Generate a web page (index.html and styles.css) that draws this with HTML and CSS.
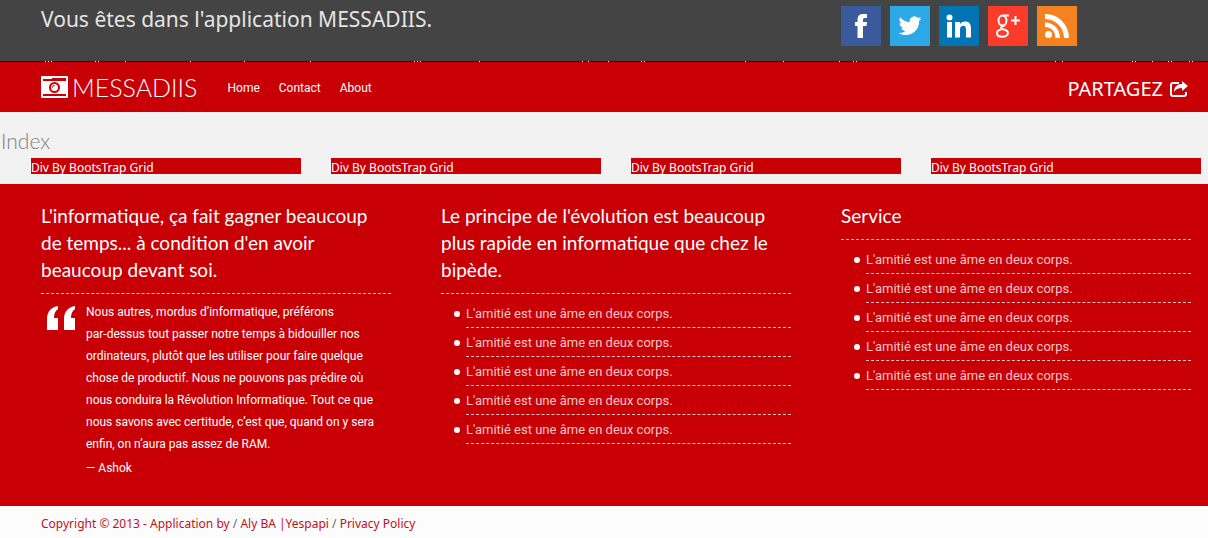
FILE: index.html
```html
<!DOCTYPE html>
<html lang="fr">
<head>
<meta charset="utf-8">
<title>MESSADIIS</title>
<link rel="stylesheet" href="styles.css">
</head>
<body>
<header class="top">
  <p class="welcome">Vous êtes dans l'application MESSADIIS.</p>
  <nav class="social" aria-label="Réseaux sociaux">
    <a class="tile facebook" href="#" aria-label="Facebook"><svg viewBox="0 0 40 40"><path d="M16.500 32V20H14v-4h2.500v-2c0-4 2-6 5.500-6h4v4h-2c-1.500 0-2 .8-2 2v2h4l-.5 4H22v12z"/></svg></a>
    <a class="tile twitter" href="#" aria-label="Twitter"><svg viewBox="0 0 40 40"><path d="M31.500 12.500c-.8.400-1.700.7-2.700.8 1-.6 1.700-1.500 2-2.500-.9.500-1.900.9-3 1.100a4.700 4.700 0 0 0-8 4.300c-3.900-.2-7.400-2.100-9.700-4.900-1.200 2-.7 4.800 1.500 6.200-.8 0-1.500-.2-2.100-.6 0 2.300 1.600 4.200 3.800 4.700-.7.200-1.400.2-2.100.1.600 1.900 2.300 3.200 4.400 3.300a9.500 9.500 0 0 1-7 1.900c2.100 1.400 4.600 2.100 7.200 2.100 8.700 0 13.600-7.300 13.300-14 .9-.7 1.800-1.500 2.400-2.500z"/></svg></a>
    <a class="tile linkedin" href="#" aria-label="LinkedIn"><svg viewBox="0 0 40 40"><circle cx="10.500" cy="11.500" r="3"/><path d="M8 16h5v15.500H8zM16 16h5v2.200c1-1.700 2.800-2.600 5-2.600 4.500 0 6 2.700 6 7.200v8.700h-5v-8c0-2.300-.5-3.700-2.600-3.700-2.200 0-3.400 1.400-3.400 3.900v7.800h-5z"/></svg></a>
    <a class="tile google" href="#" aria-label="Google plus"><svg viewBox="0 0 40 40"><g class="line"><ellipse cx="14.500" cy="14.500" rx="4" ry="5"/><path d="M15 9.500h6M17 19c-3 1.500-4.500 2-3.500 3.500 1 1.300 6.500 1 6.500 4.300 0 2.500-2.500 4-5.500 4S9 29.500 9 27.300c0-2 2-3.600 4.500-4M27.500 10v9M23 14.500h9"/></g></svg></a>
    <a class="tile rss" href="#" aria-label="RSS"><svg viewBox="0 0 40 40"><circle cx="11.500" cy="28.500" r="3.500"/><path d="M8 16.500V21c6 0 10.500 4.500 10.500 11H23c0-9-6.500-15.500-15-15.500zM8 8v5c10.500 0 19 8.500 19 19h5C32 18.500 21.500 8 8 8z"/></svg></a>
  </nav>
</header>
<svg class="edge" viewBox="0 0 1208 1" preserveAspectRatio="none" aria-hidden="true"><path d="M45 0h1v1h-1zM48 0h1v1h-1zM51 0h1v1h-1zM95 0h1v1h-1zM98 0h1v1h-1zM125 0h1v1h-1zM190 0h1v1h-1zM244 0h1v1h-1zM310 0h1v1h-1zM414 0h1v1h-1zM417 0h1v1h-1zM420 0h1v1h-1zM479 0h1v1h-1zM582 0h1v1h-1zM588 0h1v1h-1zM608 0h1v1h-1zM641 0h1v1h-1zM644 0h1v1h-1zM745 0h1v1h-1zM783 0h1v1h-1zM839 0h1v1h-1zM853 0h1v1h-1zM856 0h1v1h-1zM1055 0h1v1h-1zM1062 0h1v1h-1zM1132 0h1v1h-1zM1135 0h1v1h-1zM1152 0h1v1h-1zM1168 0h1v1h-1zM1171 0h1v1h-1zM1189 0h1v1h-1zM1192 0h1v1h-1z"/></svg>
<div class="bar">
  <a class="brand" href="#"><svg class="camera" viewBox="0 0 27 22"><rect class="body" width="27" height="22" rx="1"/><path class="cut" d="M2 3h9V2h14v3H2zM2 18h23v2H2z"/><circle class="lens" cx="13.500" cy="11.500" r="4.500"/><path class="glint" d="M11.500 11.500a2 2 0 0 1 2-2"/></svg><span>MESSADIIS</span></a>
  <nav class="menu"><a href="#">Home</a><a href="#">Contact</a><a href="#">About</a></nav>
  <a class="share" href="#">PARTAGEZ <svg viewBox="0 0 20 18"><path class="box" d="M10 3H4Q2 3 2 5v9q0 2 2 2h11q2 0 2-2v-2"/><path class="arrow" d="M13 1l6 5-6 5V8C9 8 7 9 5 12c0-5 3-8 8-8z"/></svg></a>
</div>
<main class="index">
  <h1>Index</h1>
  <div class="grid"><div>Div By BootsTrap Grid</div><div>Div By BootsTrap Grid</div><div>Div By BootsTrap Grid</div><div>Div By BootsTrap Grid</div></div>
</main>
<section class="columns">
  <article>
    <h2>L'informatique, ça fait gagner beaucoup de temps... à condition d'en avoir beaucoup devant soi.</h2>
    <div class="quote">
      <svg viewBox="0 0 29 25"><path d="M11 0v3C8 5 7 8 7 12h4v12H0V13C0 6 4 1 11 0zM28 0v3c-3 2-4 5-4 9h4v12H17V13C17 6 21 1 28 0z"/></svg>
      <blockquote><p>Nous autres, mordus d’informatique, préférons <br>par-dessus tout passer notre temps à bidouiller nos ordinateurs, plutôt que les utiliser pour faire quelque chose de productif. Nous ne pouvons pas prédire où nous conduira la Révolution Informatique. Tout ce que nous savons avec certitude, c’est que, quand on y sera enfin, on n’aura pas assez de RAM.</p><footer>— Ashok</footer></blockquote>
    </div>
  </article>
  <article>
    <h2>Le principe de l'évolution est beaucoup plus rapide en informatique que chez le bipède.</h2>
    <ul><li>L'amitié est une âme en deux corps.</li><li>L'amitié est une âme en deux corps.</li><li>L'amitié est une âme en deux corps.</li><li>L'amitié est une âme en deux corps.</li><li>L'amitié est une âme en deux corps.</li></ul>
  </article>
  <article>
    <h2>Service</h2>
    <ul><li>L'amitié est une âme en deux corps.</li><li>L'amitié est une âme en deux corps.</li><li>L'amitié est une âme en deux corps.</li><li>L'amitié est une âme en deux corps.</li><li>L'amitié est une âme en deux corps.</li></ul>
  </article>
</section>
<footer class="legal">Copyright © 2013 - Application by <i>/</i> <a href="#">Aly BA</a> |<a href="#">Yespapi</a> <i>/</i> <a href="#">Privacy Policy</a></footer>
</body>
</html>
```
FILE: styles.css
```css
* { box-sizing: border-box; }
body { margin: 0; background: #fcfcfc; color: #fff; font: 12px/16px "Noto Sans", sans-serif; }
a { color: inherit; text-decoration: none; }
h1, h2, p, ul, blockquote { margin: 0; padding: 0; font-weight: 400; }

.top { display: grid; grid-template-columns: repeat(3, 1fr); column-gap: 50px; padding: 6px 17px 15px 41px; background: #444; }
.welcome { grid-column: span 2; color: #e4e4e4; font-size: 21px; line-height: 27px; }
.social { display: flex; gap: 9px; }
.tile { width: 40px; height: 40px; }
.tile svg { display: block; fill: #fff; }
.tile .line { fill: none; stroke: #fff; stroke-width: 2; }
.facebook { background: #3b5a9b; }
.twitter { background: #2ca8e6; }
.linkedin { background: #0274b3; }
.google { background: #fb3c2b; }
.rss { background: #f58220; }
.edge { display: block; width: 100%; height: 1px; background: #161616; fill: #fff; }

.bar { display: flex; align-items: center; height: 50px; padding: 0 19px 0 41px; background: #c80005; }
.brand { display: flex; align-items: center; gap: 4px; margin-right: 30px; font: 300 25px/30px Lato, sans-serif; }
.camera { width: 27px; height: 22px; }
.camera .body { fill: #fff; }
.camera .cut { fill: #c80005; }
.camera .lens { fill: #fff; stroke: #c80005; stroke-width: 2; }
.camera .glint { fill: none; stroke: #c80005; }
.menu { display: flex; gap: 19px; padding-top: 2px; font-family: Roboto, sans-serif; }
.share { display: flex; align-items: center; gap: 6px; margin-left: auto; padding-top: 4px; font-size: 20px; line-height: 28px; }
.share svg { width: 20px; height: 18px; }
.share .box { fill: none; stroke: #fff; stroke-width: 2; }
.share .arrow { fill: #fff; }

.index { padding-bottom: 10px; background: #f2f2f2; }
.index h1 { padding: 14px 1px 2px; color: #808080; font: 300 21px/30px Lato, sans-serif; }
.grid { display: grid; grid-template-columns: repeat(4, 1fr); gap: 30px; padding: 0 7px 0 31px; }
.grid div { padding-top: 3px; background: #c80005; line-height: 13px; }

.columns { display: grid; grid-template-columns: repeat(3, 1fr); gap: 50px; padding: 18px 17px 28px 41px; background: #c80005; }
.columns h2 { padding-bottom: 10px; border-bottom: 1px dashed #f3c8c8; font: 400 19px/27px Lato, sans-serif; }
.quote { display: flex; gap: 10px; padding: 7px 0 0 6px; font-family: Roboto, sans-serif; }
.quote svg { flex: none; width: 29px; height: 25px; margin-top: 5px; fill: #fff; }
.quote p { line-height: 22px; }
.quote footer { padding-top: 3px; line-height: 20px; }
.columns ul { padding: 5px 0 0 25px; list-style: none; font: 13px/16px Roboto, sans-serif; }
.columns li { position: relative; padding: 7px 0 5px; border-bottom: 1px dashed #f3c8c8; color: #f5c6c6; }
.columns li::before { content: ""; position: absolute; left: -12px; top: 12px; width: 6px; height: 6px; border-radius: 50%; background: #fff; }

.legal { padding: 10px 41px 6px; color: #c4101a; }
.legal i { color: #666; font-style: normal; }
```
